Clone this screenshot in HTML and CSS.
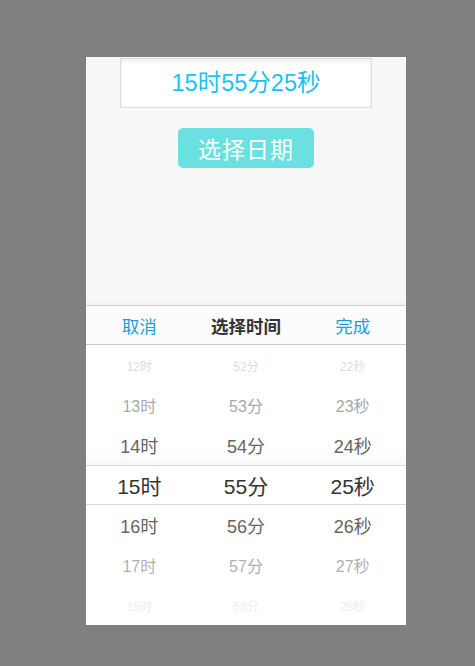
FILE: index.html
```html
<!DOCTYPE html>
<html lang="zh">
<head>
<meta charset="utf-8">
<title>选择时间</title>
<link rel="stylesheet" href="styles.css">
</head>
<body>
<div class="phone">
  <div class="time-input">15时55分25秒</div>
  <button class="date-btn">选择日期</button>
  <div class="picker">
    <div class="picker-head">
      <span class="act">取消</span>
      <span class="title">选择时间</span>
      <span class="act">完成</span>
    </div>
    <div class="wheel">
      <div class="row lv3 top"><span>12时</span><span>52分</span><span>22秒</span></div>
      <div class="row lv2"><span>13时</span><span>53分</span><span>23秒</span></div>
      <div class="row lv1 above"><span>14时</span><span>54分</span><span>24秒</span></div>
      <div class="row sel"><span>15时</span><span>55分</span><span>25秒</span></div>
      <div class="row lv1"><span>16时</span><span>56分</span><span>26秒</span></div>
      <div class="row lv2 low"><span>17时</span><span>57分</span><span>27秒</span></div>
      <div class="row lv3 bottom"><span>18时</span><span>58分</span><span>28秒</span></div>
    </div>
  </div>
</div>
</body>
</html>
```
FILE: styles.css
```css
* { box-sizing: border-box; }
html, body { margin: 0; padding: 0; }
body {
  background: #808080;
  font-family: "Liberation Sans", "Noto Sans CJK SC", sans-serif;
  height: 666px;
  overflow: hidden;
}
.phone {
  width: 320px;
  height: 568px;
  margin: 57px 0 0 86px;
  background: #f8f8f8;
  display: flex;
  flex-direction: column;
  align-items: center;
}
.time-input {
  margin-top: 1px;
  width: 252px;
  height: 50px;
  border: 1px solid #dcdcdc;
  background: #fff;
  box-shadow: inset 0 2px 4px rgba(0,0,0,0.08);
  color: #16c4f4;
  font-size: 23.5px;
  line-height: 48px;
  text-align: center;
}
.date-btn {
  margin-top: 20px;
  width: 136px;
  height: 40px;
  border: none;
  border-radius: 5px;
  background: #6be0e0;
  color: #fff;
  font-family: "Liberation Sans", "Noto Sans CJK SC", sans-serif;
  font-size: 23px;
  letter-spacing: 1px;
  padding: 0;
}
.picker {
  margin-top: auto;
  width: 100%;
  height: 320px;
  display: flex;
  flex-direction: column;
}
.picker-head {
  height: 40px;
  display: grid;
  grid-template-columns: 1fr 1fr 1fr;
  align-items: center;
  background: #fcfcfc;
  border-top: 1px solid #d4d4d4;
  border-bottom: 1px solid #c8c8c8;
  box-shadow: 0 -2px 3px rgba(0,0,0,0.04);
  font-size: 17.5px;
}
.picker-head span { text-align: center; }
.act { color: #1a9fd8; }
.title { color: #333; font-weight: bold; }
.wheel {
  flex: 1;
  background: #fff;
  display: flex;
  flex-direction: column;
}
.row {
  height: 40px;
  display: grid;
  grid-template-columns: 1fr 1fr 1fr;
  align-items: center;
}
.row span { text-align: center; }
.lv3 { font-size: 12px; color: #dcdcdc; }
.lv3.bottom { color: #eeeeee; }
.lv2 { font-size: 16px; color: #a8a8a8; }
.lv2.low { color: #b0b0b0; }
.lv1 { font-size: 18px; color: #666; }
.above { background: linear-gradient(#fff 60%, #f9f9f9); }
.sel {
  font-size: 21px;
  color: #333;
  border-top: 1px solid #d8d8d8;
  border-bottom: 1px solid #d8d8d8;
  height: 40px;
}
```
